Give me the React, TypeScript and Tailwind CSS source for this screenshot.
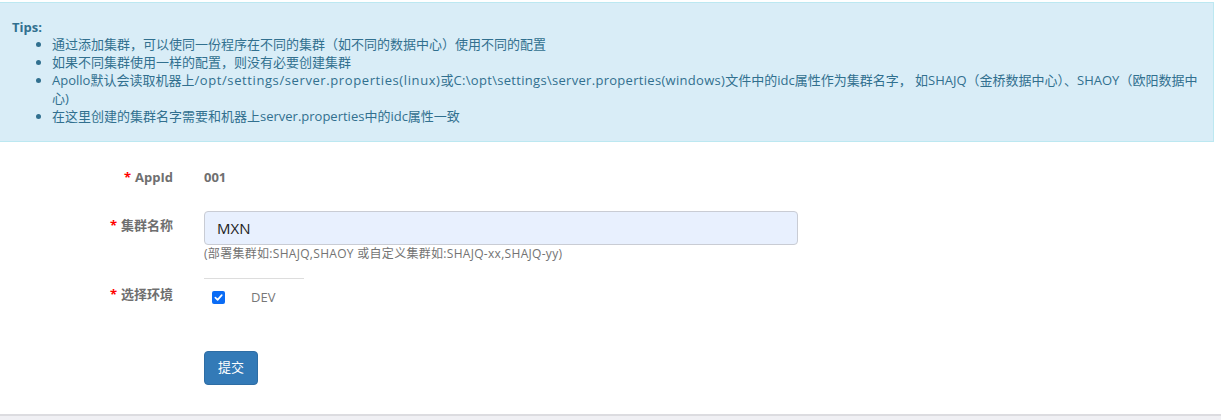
import React from "react";

const font = { fontFamily: '"Open Sans", "Noto Sans CJK SC", sans-serif' };

function Label({ text }: { text: string }) {
  return (
    <div className="w-[173px] shrink-0 text-right text-[13px] font-bold text-[#6f6f6f]">
      <span className="text-[#ff0000] mr-[4px]">*</span>
      {text}
    </div>
  );
}

export default function App() {
  return (
    <div className="w-[1221px] h-[420px] bg-[#f0f0f4] overflow-hidden" style={font}>
      <div className="bg-white h-[416px] border-b-2 border-[#dcdce0] pt-[2px]">
        <div className="w-[1214px] h-[140px] bg-[#d9edf7] border border-l-0 border-[#bce8f1] text-[#31708f] pl-[12px] pt-[15px] text-[13px]">
          <div className="font-bold leading-[18px]">Tips:</div>
          <ul className="list-disc pl-[40px] leading-[18px] pr-[12px] -mt-[1px]">
            <li>通过添加集群，可以使同一份程序在不同的集群（如不同的数据中心）使用不同的配置</li>
            <li>如果不同集群使用一样的配置，则没有必要创建集群</li>
            <li>
              Apollo默认会读取机器上
              <span className="tracking-[0.6px]">/opt/settings/server.properties(linux)</span>
              或
              <span className="tracking-[0.3px]">C:\opt\settings\server.properties(windows)</span>
              文件中的idc属性作为集群名字， 如SHAJQ（金桥数据中心）、SHAOY（欧阳数据中
              <br />
              心)
            </li>
            <li>在这里创建的集群名字需要和机器上server.properties中的idc属性一致</li>
          </ul>
        </div>

        <div className="pt-[27px]">
          <div className="flex items-center h-[18px] gap-[31px]">
            <Label text="AppId" />
            <div className="text-[13px] font-bold text-[#6f6f6f]">001</div>
          </div>

          <div className="flex gap-[31px] mt-[24px]">
            <div className="pt-[5px]">
              <Label text="集群名称" />
            </div>
            <div>
              <div className="w-[594px] h-[34px] rounded-[4px] border border-[#c9ccd4] bg-[#e8f0fe] px-[12px] flex items-center text-[15px] text-[#222]">
                MXN
              </div>
              <div className="text-[12px] tracking-[0.3px] text-[#737373] mt-[1px] leading-[16px]">
                (部署集群如:SHAJQ,SHAOY 或自定义集群如:SHAJQ-xx,SHAJQ-yy)
              </div>
              <div className="w-[100px] h-px bg-[#dddddd] mt-[16px]" />
            </div>
          </div>

          <div className="flex gap-[31px] mt-[6px]">
            <div>
              <Label text="选择环境" />
            </div>
            <div className="flex items-center pl-[8px] pt-[3px]">
              <span className="w-[13px] h-[13px] rounded-[2px] bg-[#0a6cf5] flex items-center justify-center">
                <svg width="9" height="9" viewBox="0 0 10 10">
                  <path d="M1.5 5.2 L4 7.6 L8.6 2.4" stroke="white" strokeWidth="1.9" fill="none" strokeLinecap="round" strokeLinejoin="round" />
                </svg>
              </span>
              <span className="ml-[26px] text-[13px] text-[#777]">DEV</span>
            </div>
          </div>

          <div className="pl-[204px] mt-[43px]">
            <button className="w-[54px] h-[34px] rounded-[4px] bg-[#337ab7] border border-[#2e6da4] text-white text-[13px]">
              提交
            </button>
          </div>
        </div>
      </div>
    </div>
  );
}
